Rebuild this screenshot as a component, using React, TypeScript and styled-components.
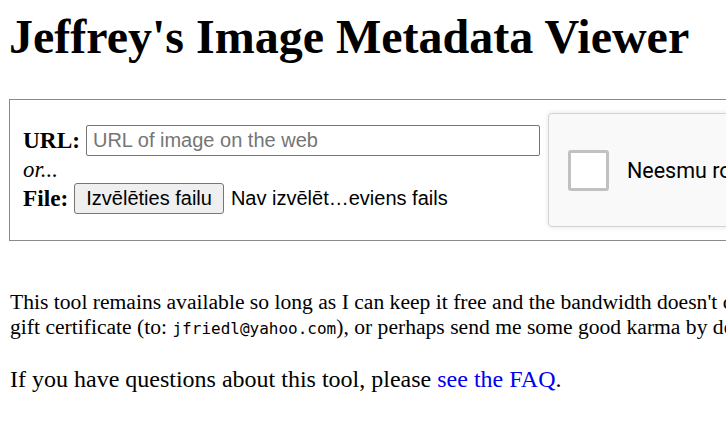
import React from "react";
import styled, { createGlobalStyle } from "styled-components";

const Global = createGlobalStyle`
  html, body {
    margin: 0;
    padding: 0;
    background: #ffffff;
    overflow: hidden;
  }
  body {
    font-family: "Liberation Serif", "Times New Roman", serif;
    color: #000;
  }
`;

const Page = styled.div`
  width: 1400px;
  padding: 10px 0 0 9px;
  box-sizing: border-box;
`;

const Title = styled.h1`
  margin: 0 0 35px 0;
  font-family: "Liberation Serif", "Times New Roman", serif;
  font-weight: bold;
  font-size: 48px;
  line-height: 54px;
  white-space: nowrap;
`;

const Frame = styled.form`
  display: flex;
  align-items: center;
  gap: 8px;
  height: 142px;
  box-sizing: border-box;
  border: 1px solid #8a8a8a;
  padding: 0 13px;
  margin: 0 0 49px 0;
`;

const Fields = styled.div`
  display: flex;
  flex-direction: column;
  font-size: 23.3px;
`;

const Row = styled.div<{ $h: number }>`
  display: flex;
  align-items: center;
  gap: 6px;
  height: ${(p) => p.$h}px;
  white-space: nowrap;
`;

const Label = styled.b`
  font-weight: bold;
  font-size: 23.3px;
`;

const Or = styled.i`
  font-style: italic;
  font-size: 22.8px;
  line-height: 25px;
`;

const UrlInput = styled.input`
  width: 454px;
  height: 31px;
  box-sizing: border-box;
  border: 1px solid #767676;
  border-radius: 2px;
  padding: 0 6px;
  font-family: "Liberation Sans", Arial, sans-serif;
  font-size: 20px;
  color: #000;
  outline: none;
  &::placeholder {
    color: #757575;
  }
`;

const FileButton = styled.button`
  height: 31px;
  box-sizing: border-box;
  border: 1px solid #767676;
  border-radius: 3px;
  background: #efefef;
  padding: 0 11px;
  font-family: "Liberation Sans", Arial, sans-serif;
  font-size: 20px;
  color: #000;
  margin-right: 1px;
`;

const FileName = styled.span`
  font-family: "Liberation Sans", Arial, sans-serif;
  font-size: 20px;
`;

const Captcha = styled.div`
  width: 438px;
  height: 114px;
  box-sizing: border-box;
  background: #f9f9f9;
  border: 1px solid #d3d3d3;
  border-radius: 4px;
  box-shadow: 0 0 4px 1px rgba(0, 0, 0, 0.08);
  display: flex;
  align-items: center;
  padding-left: 19px;
  gap: 18px;
  flex-shrink: 0;
`;

const CheckBox = styled.div`
  width: 41px;
  height: 41px;
  box-sizing: border-box;
  border: 3px solid #c1c1c1;
  border-radius: 3px;
  background: #fff;
`;

const CaptchaLabel = styled.span`
  font-family: Roboto, "Liberation Sans", sans-serif;
  font-size: 21.5px;
  color: #000;
`;

const Para = styled.p<{ $mb: number; $size: number }>`
  margin: 0 0 ${(p) => p.$mb}px 1px;
  font-size: ${(p) => p.$size}px;
  line-height: 25px;
  white-space: nowrap;
`;

const Mono = styled.code`
  font-family: "DejaVu Sans Mono", "Liberation Mono", monospace;
  font-size: 16px;
`;

const Link = styled.a`
  color: #0000ee;
  text-decoration: none;
`;

export default function App() {
  return (
    <>
      <Global />
      <Page>
        <Title>Jeffrey's Image Metadata Viewer</Title>
        <Frame onSubmit={(e) => e.preventDefault()}>
          <Fields>
            <Row $h={32}>
              <Label>URL:</Label>
              <UrlInput placeholder="URL of image on the web" />
            </Row>
            <Row $h={25}>
              <Or>or...</Or>
            </Row>
            <Row $h={34}>
              <Label>File:</Label>
              <FileButton type="button">Izvēlēties failu</FileButton>
              <FileName>Nav izvēlēt…eviens fails</FileName>
            </Row>
          </Fields>
          <Captcha>
            <CheckBox />
            <CaptchaLabel>Neesmu robots</CaptchaLabel>
          </Captcha>
        </Frame>
        <Para $mb={26} $size={21.6}>
          This tool remains available so long as I can keep it free and the bandwidth doesn't cost me too much. If you find it useful, please consider sending an Amazon
          <br />
          gift certificate (to: <Mono>jfriedl@yahoo.com</Mono>), or perhaps send me some good karma by donating to a charity.
        </Para>
        <Para $mb={0} $size={24}>
          If you have questions about this tool, please <Link href="#">see the FAQ</Link>.
        </Para>
      </Page>
    </>
  );
}
